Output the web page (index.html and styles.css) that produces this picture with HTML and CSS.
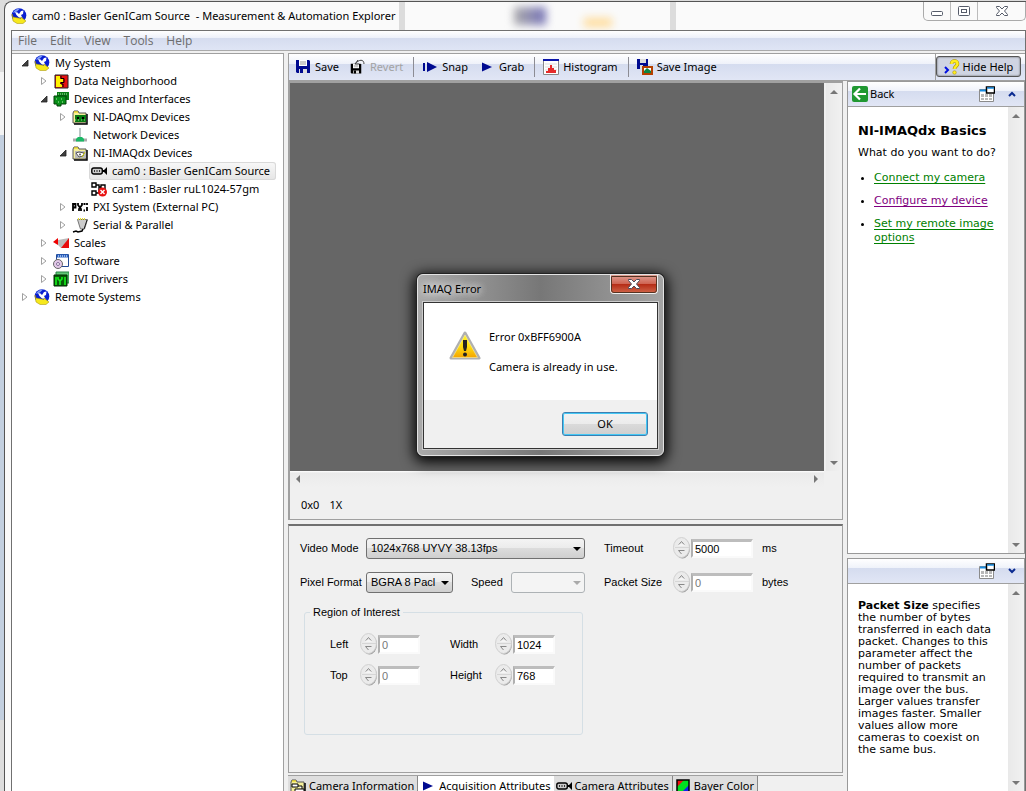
FILE: index.html
```html
<!DOCTYPE html>
<html lang="en">
<head>
<meta charset="utf-8">
<title>cam0 : Basler GenICam Source - Measurement &amp; Automation Explorer</title>
<link rel="stylesheet" href="styles.css">
</head>
<body>
<svg class="defs" aria-hidden="true">
  <symbol id="globe" viewBox="0 0 16 16"><circle cx="8" cy="7.500" r="7.300" fill="#0a1fd0"/><path d="M2 5c1-3 4-4.500 7-4.500l-3 3z" fill="#7d9cf6"/><path d="M4 4l2.500.5L8 6l2-3 2.500-.5L12 6l-2 1 1.500 3L8 9.500 5.500 7z" fill="#fff"/><path d="M1 6l1 3 8 1.500V9l5 4-3 2.500H6L2 13z" fill="#f6e81c" stroke="#a08c00" stroke-width=".5"/></symbol>
  <symbol id="open" viewBox="0 0 8 8"><path d="M7 1v6H1z" fill="#404040" stroke="#222" stroke-width=".8"/></symbol>
  <symbol id="closed" viewBox="0 0 8 8"><path d="M1.500.5v7L6 4z" fill="#fff" stroke="#a0a0a0"/></symbol>
  <symbol id="camera" viewBox="0 0 16 16"><rect x=".8" y="5" width="10.500" height="6" rx="2" fill="#ccc" stroke="#000" stroke-width="1.400"/><path d="M3 8h1m1.500 0h1m1.500 0h1" stroke="#000" stroke-width="1.300"/><path d="M11 7h2l3-3v8l-3-3h-2z"/></symbol>
  <symbol id="folder" viewBox="0 0 16 16"><path d="M1 14V4l1-2h4l1 2h7v10z" fill="#f5ef9a" stroke="#555"/><path d="M2 3h4" stroke="#f2d800"/><path d="M15 5v10H2" fill="none" stroke="#000" stroke-width="1.500"/></symbol>
  <symbol id="play" viewBox="0 0 16 16"><path d="M3 3.500v9L13 8z" fill="#000a90"/></symbol>
  <symbol id="floppy" viewBox="0 0 16 16"><path d="M1 1h13l1 1v12H2l-1-1z"/><path d="M4 1h8v6H4z" fill="#fff"/><path d="M5 3h6M5 5h6" stroke="#999"/><path d="M4 10h8v4H4z" fill="#ddd"/><path d="M5 10h3v4H5z"/></symbol>
  <symbol id="up" viewBox="0 0 8 8"><path d="M0 6L4 2l4 4z" fill="#777"/></symbol>
  <symbol id="down" viewBox="0 0 8 8"><path d="M0 2l4 4 4-4z" fill="#777"/></symbol>
  <symbol id="left" viewBox="0 0 8 8"><path d="M6 0L2 4l4 4z" fill="#777"/></symbol>
  <symbol id="right" viewBox="0 0 8 8"><path d="M2 0l4 4-4 4z" fill="#777"/></symbol>
  <symbol id="layout" viewBox="0 0 16 16"><path d="M.5 3.500h14v12H.5z" fill="#fff" stroke="#8b8b8b"/><path d="M1 4.500h7" stroke="#168be0" stroke-width="2"/><path d="M2 8h3v3H2zm4 0h3v3H6zm4 0h3v3h-3zM2 12h3v2H2zm4 0h3v2H6zm4 0h3v2h-3z" fill="#b8b8b8"/><path d="M7.500 1h8v6h-8z" fill="#fff" stroke="#000" stroke-width="1.500"/><path d="M8 2h7" stroke="#168be0" stroke-width="1.500"/></symbol>
  <symbol id="steps" viewBox="0 0 18 22"><ellipse cx="9.500" cy="11.500" rx="7.500" ry="10" fill="#999"/><ellipse cx="8.500" cy="10.500" rx="8" ry="10" fill="#ebebeb" stroke="#d0d0d0"/><path d="M2 10.500h14" stroke="#d6d6d6"/><path d="M5.500 8l3-3.500 3 3.500" fill="none" stroke="#888"/><path d="M5.500 8h6" stroke="#fff"/><path d="M11.500 13.500h-6l3 3.500" fill="none" stroke="#888"/></symbol>
</svg>
<div class="desktop">
<div class="behind"></div>
<div class="window">
  <header class="titlebar">
    <svg class="icon16"><use href="#globe"/></svg>
    <h1>cam0 : Basler GenICam Source&nbsp; - Measurement &amp; Automation Explorer</h1>
    <div class="glass" aria-hidden="true"><i class="smudge"></i><i class="faint"></i><i class="seam"></i></div>
    <div class="caption">
      <button aria-label="Minimize"><svg viewBox="0 0 14 12"><rect x="1.500" y="6.500" width="11" height="4" rx="1" fill="#fff" stroke="#555b69"/></svg></button>
      <button aria-label="Maximize"><svg viewBox="0 0 14 12"><rect x="1.500" y="1.500" width="11" height="9" rx="1" fill="#fff" stroke="#555b69"/><rect x="4.500" y="4.500" width="5" height="3" fill="#fff" stroke="#555b69"/></svg></button>
      <button class="wide" aria-label="Close"><svg viewBox="0 0 14 12"><path d="M1.500 1.500h3L7 4l2.500-2.500h3v1L9.500 6l3 3.500v1h-3L7 8l-2.500 2.500h-3v-1l3-3.500-3-3.500z" fill="#fff" stroke="#555b69"/></svg></button>
    </div>
  </header>
  <div class="client">
    <nav class="menubar"><button>File</button><button>Edit</button><button>View</button><button>Tools</button><button>Help</button></nav>
    <div class="main">
      <nav class="tree">
        <ul>
          <li><div class="row"><svg class="arrow"><use href="#open"/></svg><span class="item"><svg class="icon16"><use href="#globe"/></svg>My System</span></div>
            <ul>
              <li><div class="row"><svg class="arrow"><use href="#closed"/></svg><span class="item"><svg class="icon16" viewBox="0 0 16 16"><path d="M2 2h13v13H2z" fill="#e81010" stroke="#222"/><path d="M3 3h4v3h3v3H7v2h2v3H3z" fill="#fff200"/><path d="M8 3v2.500h3V9.500H8V11h2v3" fill="none" stroke="#000"/></svg>Data Neighborhood</span></div></li>
              <li><div class="row"><svg class="arrow"><use href="#open"/></svg><span class="item"><svg class="icon16" viewBox="0 0 16 16"><path d="M4 1h12v8h-4v2H4z" fill="#0a7d16"/><path d="M1 5h12v8H8v2H4v-2H1z" fill="#089018" stroke="#033f08"/><path d="M5 3h9M3 8h2m3 0h2m-5 3h1m3 0h2" stroke="#b5efb0" stroke-dasharray="1 1"/></svg>Devices and Interfaces</span></div>
                <ul>
                  <li><div class="row"><svg class="arrow"><use href="#closed"/></svg><span class="item"><svg class="icon16" viewBox="0 0 16 16"><use href="#folder"/><path d="M3 6h11v7H3z" fill="#087b10"/><path d="M5 8h2v2H5zm5 0h2v2h-2z"/><path d="M3 11h11" stroke="#90d890" stroke-dasharray="1 2"/></svg>NI-DAQmx Devices</span></div></li>
                  <li><div class="row"><span class="arrow"></span><span class="item"><svg class="icon16" viewBox="0 0 16 16"><path d="M7 1h2v10H7z" fill="#bcc6c6"/><path d="M1 13h14" stroke="#aaa" stroke-width="3"/><path d="M4 14.500V12l2-2h4l2 2v2.500z" fill="#1ab865"/></svg>Network Devices</span></div></li>
                  <li><div class="row"><svg class="arrow"><use href="#open"/></svg><span class="item"><svg class="icon16" viewBox="0 0 16 16"><use href="#folder"/><path d="M3 6h11v7H3z" fill="#bbb"/><path d="M4 8l3-1 5 1-1 3-4 1z" fill="#fff" stroke="#555"/><circle cx="8" cy="9.500" r="1" fill="#555"/><path d="M10 12l3-5" stroke="#cc0"/></svg>NI-IMAQdx Devices</span></div>
                    <ul>
                      <li><div class="row"><span class="arrow"></span><span class="item selected"><svg class="icon16"><use href="#camera"/></svg>cam0 : Basler GenICam Source</span></div></li>
                      <li><div class="row"><span class="arrow"></span><span class="item"><svg class="icon16" viewBox="0 0 16 16"><path d="M1 2h4v4H1zm0 8h4v4H1zm9-6h4v4h-4zM5 4h3v8H5m3-6h2" fill="none" stroke="#000" stroke-width="1.400"/><circle cx="11.500" cy="11" r="4.500" fill="#e81212"/><path d="M9.500 9l4 4m0-4l-4 4" stroke="#fff" stroke-width="1.400"/></svg>cam1 : Basler ruL1024-57gm</span></div></li>
                    </ul></li>
                  <li><div class="row"><svg class="arrow"><use href="#closed"/></svg><span class="item"><svg class="icon16" viewBox="0 0 16 16"><path d="M1 12V5h2.500v3.500H1M6 4v2l3 4v2M10 4v2l-3 4v2M11.500 5h2M11.500 11.500h1.500M15 4v2m0 2v4" fill="none" stroke="#000" stroke-width="1.800"/></svg>PXI System (External PC)</span></div></li>
                  <li><div class="row"><svg class="arrow"><use href="#closed"/></svg><span class="item"><svg class="icon16" viewBox="0 0 16 16"><path d="M5.500 2.500h10L13.500 9l-1 3h-4l-1-3z" fill="#ccc" stroke="#777"/><path d="M15 3l-2 6-1 3" fill="none" stroke="#222"/><path d="M6 2h8" stroke="#e5dc35" stroke-width="2" stroke-dasharray="1 1"/><path d="M11 12l-1 2-4 1-2-1-3 1" fill="none" stroke="#000" stroke-width="1.500"/></svg>Serial &amp; Parallel</span></div></li>
                </ul></li>
              <li><div class="row"><svg class="arrow"><use href="#closed"/></svg><span class="item"><svg class="icon16" viewBox="0 0 16 16"><path d="M0 7l5-4v7z" fill="#e00"/><path d="M5 5l11-2v10H8L5 10z" fill="#bbb"/><path d="M16 3v10H8z" fill="#e80c0c"/></svg>Scales</span></div></li>
              <li><div class="row"><svg class="arrow"><use href="#closed"/></svg><span class="item"><svg class="icon16" viewBox="0 0 16 16"><path d="M3.500 1.500h12v12h-12z" fill="#fff" stroke="#234a96"/><path d="M4 3h11" stroke="#2a63c4" stroke-width="3"/><path d="M5 3h9" stroke="#fff" stroke-dasharray="1 1"/><circle cx="5" cy="11" r="4.500" fill="#e3c9e8" stroke="#666"/><circle cx="5" cy="11" r="1.500" fill="#fff" stroke="#866b9a"/></svg>Software</span></div></li>
              <li><div class="row"><svg class="arrow"><use href="#closed"/></svg><span class="item"><svg class="icon16" viewBox="0 0 16 16"><path d="M3 1h13v11H3z" fill="#62c878" stroke="#298344"/><path d="M1 4h13v11H1z" fill="#075b08" stroke="#002b00"/><path d="M3 6v8M12 6v8M5 6v2l2 2v4m2-8v2l-2 2" stroke="#14f01c" stroke-width="1.600" fill="none"/></svg>IVI Drivers</span></div></li>
            </ul></li>
          <li><div class="row"><svg class="arrow"><use href="#closed"/></svg><span class="item"><svg class="icon16"><use href="#globe"/></svg>Remote Systems</span></div></li>
        </ul>
      </nav>
      <div class="work">
        <div class="toolbar">
          <div class="tools">
            <button><svg class="icon16 navy"><use href="#floppy"/></svg>Save</button>
            <button class="off" disabled><svg class="icon16" viewBox="0 0 16 16"><use href="#floppy" y="4" width="12" height="12"/><path d="M5 5l3-4M5 5h4M5 5c4-5 9-5 9 0" fill="none" stroke="#444"/></svg>Revert</button>
            <span class="sep"></span>
            <button><svg class="icon16" viewBox="0 0 16 16"><path d="M2 4v8" stroke="#000a90" stroke-width="2"/><path d="M5 3v10l10-5z" fill="#000a90"/></svg>Snap</button>
            <button><svg class="icon16"><use href="#play"/></svg>Grab</button>
            <span class="sep"></span>
            <button><svg class="icon16" viewBox="0 0 16 16"><path d="M.5.500h15v15H.5z" fill="#fff" stroke="#888"/><path d="M0 1h16" stroke="#0a14a8" stroke-width="2"/><path d="M2 5h12M2 8h12M2 11h12" stroke="#ddd"/><path d="M3 14v-2h2V9h2V6h2v3h2v2h2v3z" fill="#e52b2b"/></svg>Histogram</button>
            <span class="sep"></span>
            <button><svg class="icon16" viewBox="0 0 16 16"><path d="M0 0h11v10H0z" fill="#000a90"/><path d="M3 0h6v4H3zm0 6h3v4H3z" fill="#ddd"/><path d="M6 8h9v7H6z" fill="#fff" stroke="#b54000" stroke-width="2"/><path d="M7 14v-2l3-3 4 3v2z" fill="#108644"/></svg>Save Image</button>
          </div>
          <div class="helpslot"><button class="hidehelp"><svg class="icon16" viewBox="0 0 16 16"><path d="M1 8l3 3-3 3" fill="none" stroke="#0010e0" stroke-width="2"/><path d="M7.500 5c0-4 6-4 6 0 0 2-3 2.500-3 5" fill="none" stroke="#a58c00" stroke-width="3.600"/><path d="M7.500 5c0-4 6-4 6 0 0 2-3 2.500-3 5" fill="none" stroke="#ffee20" stroke-width="2.500"/><circle cx="10.500" cy="13.500" r="1.800" fill="#ffee20" stroke="#a58c00" stroke-width=".5"/></svg>Hide Help</button></div>
        </div>
        <div class="columns">
          <div class="center">
            <section class="viewer">
              <div class="image"></div>
              <div class="vscroll"><svg><use href="#up"/></svg><svg><use href="#down"/></svg></div>
              <div class="hscroll"><svg><use href="#left"/></svg><svg><use href="#right"/></svg></div>
              <div class="status"><span>0x0</span><span>1X</span></div>
            </section>
            <form class="settings">
              <div class="fields">
                <label for="mode">Video Mode</label>
                <div class="combo"><select id="mode"><option>1024x768 UYVY 38.13fps</option></select></div>
                <label class="second" for="timeout">Timeout</label>
                <div class="spin"><svg><use href="#steps"/></svg><input id="timeout" value="5000"></div>
                <span class="unit">ms</span>
                <label for="format">Pixel Format</label>
                <div class="pair"><div class="combo short"><select id="format"><option>BGRA 8 Pacl</option></select></div><label for="speed">Speed</label><div class="combo dim"><select id="speed" disabled><option></option></select></div></div>
                <label class="second" for="packet">Packet Size</label>
                <div class="spin"><svg><use href="#steps"/></svg><input id="packet" value="0" disabled></div>
                <span class="unit">bytes</span>
              </div>
              <fieldset>
                <legend>Region of Interest</legend>
                <div class="roi">
                  <label for="left-in">Left</label><div class="spin"><svg><use href="#steps"/></svg><input id="left-in" value="0" disabled></div>
                  <label class="second" for="width-in">Width</label><div class="spin"><svg><use href="#steps"/></svg><input id="width-in" value="1024"></div>
                  <label for="top-in">Top</label><div class="spin"><svg><use href="#steps"/></svg><input id="top-in" value="0" disabled></div>
                  <label class="second" for="height-in">Height</label><div class="spin"><svg><use href="#steps"/></svg><input id="height-in" value="768"></div>
                </div>
              </fieldset>
            </form>
            <div class="tabs">
              <button><svg class="icon16" viewBox="0 0 16 16"><use href="#folder"/><path d="M2 6h6v3H2zm3 5h9v3H5zM8 8h4v3" fill="#fff" stroke="#000"/></svg>Camera Information</button>
              <button class="active"><svg class="icon16"><use href="#play"/></svg>Acquisition Attributes</button>
              <button><svg class="icon16"><use href="#camera"/></svg>Camera Attributes</button>
              <button><svg class="icon16" viewBox="0 0 16 16"><path d="M2 2h12v12H2z" fill="#00e020"/><path d="M2 2h7l-7 7z" fill="#f01010"/><path d="M14 7v7H7z" fill="#1020f0"/><path d="M2 2h12v12H2z" fill="none" stroke="#000" stroke-width="1.500"/></svg>Bayer Color</button>
            </div>
          </div>
          <aside class="help">
            <section class="panel grow">
              <header><button class="back"><svg class="icon16" viewBox="0 0 16 16"><rect width="16" height="16" rx="2" fill="#209832"/><path d="M8 2.500L2.500 8 8 13.500M3 8h11" fill="none" stroke="#fff" stroke-width="2.200"/></svg>Back</button><span class="fill"></span><svg class="icon16"><use href="#layout"/></svg><button class="chev" aria-label="Collapse"><svg viewBox="0 0 8 6"><path d="M1 5l3-3 3 3" fill="none" stroke="#0a2a90" stroke-width="2"/></svg></button></header>
              <div class="scroller"><div class="topic"><h2>NI-IMAQdx Basics</h2><p>What do you want to do?</p>
                <ul><li><a href="#c">Connect my camera</a></li><li><a class="visited" href="#d">Configure my device</a></li><li><a href="#o">Set my remote image options</a></li></ul></div>
                <div class="vscroll"><svg><use href="#up"/></svg><svg><use href="#down"/></svg></div></div>
            </section>
            <section class="panel note">
              <header><span class="fill"></span><svg class="icon16"><use href="#layout"/></svg><button class="chev" aria-label="Expand"><svg viewBox="0 0 8 6"><path d="M1 1l3 3 3-3" fill="none" stroke="#0a2a90" stroke-width="2"/></svg></button></header>
              <div class="scroller"><p class="hint"><b>Packet Size</b> specifies the number of bytes transferred in each data packet. Changes to this parameter affect the number of packets required to transmit an image over the bus. Larger values transfer images faster. Smaller values allow more cameras to coexist on the same bus.</p>
                <div class="vscroll"><svg><use href="#up"/></svg><svg><use href="#down"/></svg></div></div>
            </section>
          </aside>
        </div>
      </div>
    </div>
  </div>
</div>
</div>
<div class="dialog" role="dialog" aria-labelledby="dlg-title">
  <header><h2 id="dlg-title">IMAQ Error</h2><button class="close" aria-label="Close"><svg viewBox="0 0 14 12"><path d="M1.500 1.500h3L7 4l2.500-2.500h3v1L9.500 6l3 3.500v1h-3L7 8l-2.500 2.500h-3v-1l3-3.500-3-3.500z" fill="#fff" stroke="#4b4b5a"/></svg></button></header>
  <div class="dlgbody">
    <div class="message">
      <svg viewBox="0 0 32 30"><defs><linearGradient id="warn" x2="0" y2="1"><stop stop-color="#fff22a"/><stop offset=".5" stop-color="#ffe010"/><stop offset="1" stop-color="#f5a400"/></linearGradient></defs><path d="M16 2L30 27H2z" fill="#c8c8c8" stroke="#b0b0b0" stroke-width="3" stroke-linejoin="round"/><path d="M16 4L28.500 26.500h-25z" fill="url(#warn)" stroke="#fff0a0" stroke-width=".6"/><path d="M14 9h4v7l-1 4h-2l-1-4z" fill="#222"/><circle cx="16" cy="23.500" r="2" fill="#222"/></svg>
      <div><p>Error 0xBFF6900A</p><p>Camera is already in use.</p></div>
    </div>
    <footer><button class="ok">OK</button></footer>
  </div>
</div>
</body>
</html>
```
FILE: styles.css
```css
* { box-sizing: border-box; }
body { margin: 0; height: 100vh; overflow: hidden; background: #dcdcdc; color: #000; font: 11px/18px "Noto Sans", "Open Sans", sans-serif; }
button, input, select { font: inherit; color: inherit; border: 0; background: none; padding: 0; margin: 0; }
h1, h2, p, ul { margin: 0; padding: 0; font-weight: normal; font-size: inherit; }
ul { list-style: none; }
.defs { position: absolute; width: 0; height: 0; }
.icon16 { width: 16px; height: 16px; flex: none; }
.fill { flex: 1; }
.desktop { height: 100%; display: flex; padding-top: 1px; }
.behind { width: 4px; flex: none; background: linear-gradient(#ddd 0 9%, #f4f4f4 9% 17%, #c3d0e0 17% 91%, #ddd 91%); }

/* Window frame */
.window { flex: 1; min-width: 0; display: flex; flex-direction: column; border: 1px solid #555; border-right: 0; border-bottom: 0; border-radius: 8px 0 0 0; background: #fafafa; }
.titlebar { height: 28px; flex: none; display: flex; align-items: center; gap: 5px; padding-left: 6px; background: linear-gradient(90deg, transparent 394px, #dcdcdc 394px 400px, transparent 400px); }
.titlebar h1 { white-space: nowrap; }
.glass { flex: 1; height: 100%; display: flex; align-items: center; overflow: hidden; }
.glass i { flex: none; }
.seam { width: 6px; height: 100%; background: #dcdcdc; }
.smudge { width: 32px; height: 18px; margin: 0 38px 0 114px; background: linear-gradient(90deg, #aaa, #7774b8); filter: blur(4px); }
.faint { width: 28px; height: 9px; margin: 12px 58px 0 0; background: #ffdc9a; filter: blur(4px); }
.caption { display: flex; align-self: flex-start; border: 1px solid #aaa; border-top: 0; border-radius: 0 0 5px 5px; height: 19px; }
.caption button { width: 27px; border-right: 1px solid #bbb; display: grid; place-items: center; }
.caption .wide { width: 47px; border: 0; }
.caption svg { width: 14px; height: 12px; }
.client { flex: 1; min-height: 0; margin-left: 6px; display: flex; flex-direction: column; border: 1px solid #707070; border-bottom: 0; background: #f0f0f0; }
.menubar { height: 20px; flex: none; display: flex; gap: 13px; padding: 0 6px; background: linear-gradient(#fff, #eef1fa 35%, #d5dcef 36%, #dfe5f5); border-bottom: 1px solid #aaa; color: #6d6d6d; font: 12px/18px "Open Sans", sans-serif; }
.main { flex: 1; min-height: 0; display: flex; gap: 4px; margin-top: 2px; }

/* Device tree */
.tree { width: 272px; flex: none; padding-left: 9px; border: 1px solid #a0a0a0; border-width: 1px 1px 0 0; background: #fff; overflow: hidden; white-space: nowrap; }
.tree ul ul { padding-left: 19px; }
.row { height: 18px; display: flex; align-items: center; gap: 3px; }
.arrow { width: 8px; height: 8px; flex: none; }
.item { display: flex; align-items: center; gap: 5px; height: 18px; padding: 0 6px 0 2px; }
.selected { border-radius: 3px; background: linear-gradient(#f8f8f8, #e5e5e5); box-shadow: inset 0 0 0 1px #d9d9d9; }

/* Toolbar */
.work { flex: 1; min-width: 0; display: flex; flex-direction: column; }
.toolbar { height: 28px; flex: none; display: flex; background: linear-gradient(#fff, #eff2fa 38%, #d5dcef 39%, #e1e6f5); border: 1px solid #a0a0a0; border-width: 1px 0 1px 1px; }
.tools { flex: 1; display: flex; align-items: center; padding-left: 6px; }
.tools button { display: flex; align-items: center; gap: 4px; margin-right: 11px; }
.tools button + .sep { margin-left: -1px; }
.tools .off { color: #a3a3a3; }
.navy { fill: #000a90; }
.sep { width: 1px; height: 20px; background: #8c8c94; margin-right: 8px; }
.helpslot { padding: 2px 4px 3px 0; border-left: 1px solid #a0a0a0; }
.hidehelp { height: 21px; width: 85px; display: flex; align-items: center; justify-content: center; gap: 3px; border: 1px solid #555; border-radius: 3px; background: #cfd4e2; box-shadow: inset 0 0 2px #555; }
.columns { flex: 1; min-height: 0; display: flex; gap: 4px; }

/* Image viewer */
.center { flex: 1; min-width: 0; display: flex; flex-direction: column; }
.viewer { flex: 1; min-height: 0; display: grid; grid-template: 1fr 16px 32px / 1fr 18px; border: 1px solid #a0a0a0; border-width: 2px 1px 1px 2px; margin-bottom: 4px; }
.image { background: #666; }
.vscroll { width: 16px; flex: none; margin-left: auto; display: flex; flex-direction: column; justify-content: space-between; align-items: center; padding: 5px 0 4px; background: linear-gradient(90deg, #e9e9e9, #f1f1f1); }
.vscroll svg, .hscroll svg { width: 8px; height: 8px; }
.hscroll { display: flex; justify-content: space-between; align-items: center; padding: 0 4px; background: linear-gradient(#fff, #eaeaea 2px, #f0f0f0); }
.status { grid-column: 1 / 3; display: flex; align-items: center; gap: 10px; padding: 4px 0 0 11px; }

/* Acquisition settings */
.settings { height: 249px; flex: none; font: 11px/14px "Liberation Sans", Arial, sans-serif; border: 1px solid #a0a0a0; border-top: 2px solid #707070; padding: 10px 0 0 11px; }
.fields { display: grid; grid-template-columns: 66px 219px 88px 80px auto; grid-auto-rows: 24px; row-gap: 10px; align-items: center; }
.fields > .second { padding-left: 19px; }
.unit { padding-left: 9px; }
.combo { position: relative; height: 21px; }
.combo select { appearance: none; width: 100%; height: 21px; padding: 0 16px 0 4px; border: 1px solid #707070; border-radius: 3px; background: linear-gradient(#f4f4f4, #ebebeb 48%, #dcdcdc 50%, #cfcfcf); opacity: 1; white-space: nowrap; }
.combo::after { content: ""; position: absolute; right: 4px; top: 9px; border: 4px solid transparent; border-top-color: #000; border-bottom: 0; pointer-events: none; }
.short { width: 87px; }
.dim { width: 74px; margin-left: auto; }
.combo.dim select { background: #f4f4f4; border-color: #adb2b5; }
.dim::after { border-top-color: #aaa; }
.pair { display: flex; gap: 18px; align-items: center; }
.pair label { margin-right: -18px; }
.spin { display: flex; align-items: center; height: 22px; }
.spin svg { width: 18px; height: 22px; flex: none; }
.spin input { flex: 1; width: 0; height: 19px; padding-left: 2px; background: #fff; border: 2px solid #fafafa; border-top: 3px solid #bdbdbd; border-left: 2px solid #b0b0b0; }
.spin input:disabled { color: #777; }
fieldset { width: 279px; height: 130px; margin: 11px 0 0 4px; padding: 14px 0 0 25px; border: 1px solid #d5dfe5; border-radius: 3px; }
legend { padding: 0 3px; margin-left: -20px; }
.roi { display: grid; grid-template-columns: 30px 60px 75px 60px; grid-auto-rows: 22px; row-gap: 9px; align-items: center; }
.roi .second { padding-left: 30px; }

/* Bottom tabs */
.tabs { height: 16px; flex: none; display: flex; align-items: flex-start; border-top: 1px solid #a0a0a0; margin-top: 2px; overflow: hidden; }
.tabs button { flex: none; display: flex; align-items: center; gap: 3px; height: 20px; padding: 0 3px 0 2px; border: 1px solid #888; border-width: 0 1px 0 0; background: #dedede; white-space: nowrap; }
.tabs .active { background: #fff; border: 0; }

/* Help column */
.help { width: 178px; flex: none; display: flex; flex-direction: column; gap: 4px; }
.panel { display: flex; flex-direction: column; border: 1px solid #999; background: #fff; }
.grow { flex: 1; min-height: 0; }
.note { height: 233px; flex: none; border-bottom: 0; }
.panel header { height: 25px; flex: none; display: flex; align-items: center; padding: 0 2px 0 4px; background: linear-gradient(#fff, #eff2fa 38%, #d5dcef 39%, #e1e6f5); border-bottom: 1px solid #a0a0a0; }
.back { display: flex; align-items: center; gap: 2px; }
.chev { width: 20px; margin-left: 7px; display: grid; place-items: center; }
.chev svg { width: 8px; height: 6px; }
.scroller { flex: 1; min-height: 0; display: flex; font: 11px/12px "DejaVu Sans", Verdana, sans-serif; }
.topic { flex: 1; padding: 16px 0 0 10px; line-height: 14px; }
.topic h2 { font-size: 13px; font-weight: bold; line-height: 16px; margin-bottom: 7px; white-space: nowrap; }
.topic p { margin-bottom: 11px; white-space: nowrap; }
.topic ul { list-style: disc; padding-left: 16px; }
.topic li { margin-bottom: 9px; }
a { color: #008000; text-underline-offset: 2px; }
.visited { color: #800080; }
.hint { flex: 1; padding: 16px 8px 0 10px; }

/* Error dialog */
.dialog { position: absolute; left: 417px; top: 274px; width: 247px; height: 182px; display: flex; flex-direction: column; padding: 0 5px 6px; border: 1px solid #e3e3e3; border-radius: 6px; background: linear-gradient(90deg, #aaa, #777 50%, #a4a4a4); box-shadow: 0 0 0 1px #222, 0 3px 14px 3px #000; }
.dialog header { height: 27px; flex: none; display: flex; justify-content: space-between; align-items: center; }
.dialog h2 { text-shadow: 0 0 8px #fff, 0 0 8px #fff; }
.close { width: 48px; height: 19px; align-self: flex-start; display: grid; place-items: center; background: linear-gradient(#e0a095, #cf6553 48%, #b42a14 50%, #d0664a); border: 1px solid #eee; border-top: 0; border-radius: 0 0 4px 4px; outline: 1px solid #532; outline-offset: -2px; }
.close svg { width: 14px; height: 12px; }
.dlgbody { flex: 1; display: flex; flex-direction: column; border: 1px solid #333; outline: 1px solid #ccc; background: #fff; }
.message { flex: 1; display: flex; gap: 8px; padding: 25px 0 0 25px; }
.message svg { width: 32px; height: 30px; margin-top: 3px; }
.message p { margin-bottom: 12px; }
.dlgbody footer { height: 48px; padding: 12px 9px; display: flex; justify-content: flex-end; background: #f0f0f0; }
.ok { width: 86px; height: 24px; border: 1px solid #3c7fb1; border-radius: 3px; background: linear-gradient(#f2f2f2, #ebebeb 50%, #dadada 51%, #cfcfcf); box-shadow: inset 0 0 0 1px #44c8f5; }
```
